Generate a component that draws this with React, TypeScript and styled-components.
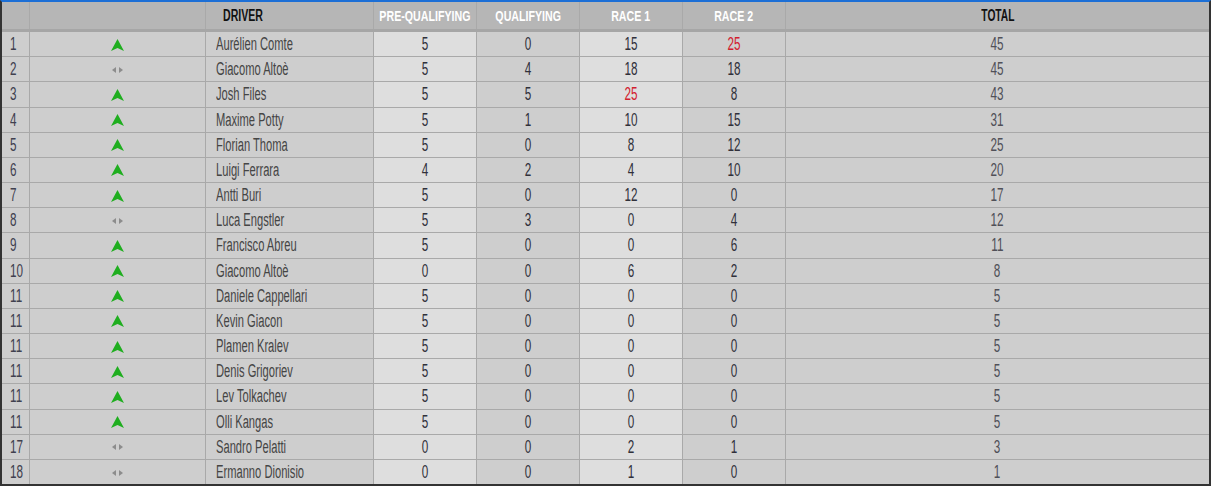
import React from 'react';
import styled, {createGlobalStyle} from 'styled-components';

const GlobalStyle = createGlobalStyle`
  html, body {
    margin: 0;
    padding: 0;
    background: #ffffff;
  }
  body {
    font-family: "Liberation Sans", Arial, sans-serif;
  }
`;

type Trend = 'up' | 'same';

type Entry = {
  pos: number;
  trend: Trend;
  driver: string;
  scores: number[];
  total: number;
  hot?: number[];
};

const rows: Entry[] = [
  {pos: 1, trend: 'up', driver: 'Aurélien Comte', scores: [5, 0, 15, 25], total: 45, hot: [3]},
  {pos: 2, trend: 'same', driver: 'Giacomo Altoè', scores: [5, 4, 18, 18], total: 45},
  {pos: 3, trend: 'up', driver: 'Josh Files', scores: [5, 5, 25, 8], total: 43, hot: [2]},
  {pos: 4, trend: 'up', driver: 'Maxime Potty', scores: [5, 1, 10, 15], total: 31},
  {pos: 5, trend: 'up', driver: 'Florian Thoma', scores: [5, 0, 8, 12], total: 25},
  {pos: 6, trend: 'up', driver: 'Luigi Ferrara', scores: [4, 2, 4, 10], total: 20},
  {pos: 7, trend: 'up', driver: 'Antti Buri', scores: [5, 0, 12, 0], total: 17},
  {pos: 8, trend: 'same', driver: 'Luca Engstler', scores: [5, 3, 0, 4], total: 12},
  {pos: 9, trend: 'up', driver: 'Francisco Abreu', scores: [5, 0, 0, 6], total: 11},
  {pos: 10, trend: 'up', driver: 'Giacomo Altoè', scores: [0, 0, 6, 2], total: 8},
  {pos: 11, trend: 'up', driver: 'Daniele Cappellari', scores: [5, 0, 0, 0], total: 5},
  {pos: 11, trend: 'up', driver: 'Kevin Giacon', scores: [5, 0, 0, 0], total: 5},
  {pos: 11, trend: 'up', driver: 'Plamen Kralev', scores: [5, 0, 0, 0], total: 5},
  {pos: 11, trend: 'up', driver: 'Denis Grigoriev', scores: [5, 0, 0, 0], total: 5},
  {pos: 11, trend: 'up', driver: 'Lev Tolkachev', scores: [5, 0, 0, 0], total: 5},
  {pos: 11, trend: 'up', driver: 'Olli Kangas', scores: [5, 0, 0, 0], total: 5},
  {pos: 17, trend: 'same', driver: 'Sandro Pelatti', scores: [0, 0, 2, 1], total: 3},
  {pos: 18, trend: 'same', driver: 'Ermanno Dionisio', scores: [0, 0, 1, 0], total: 1},
];

const sessions = ['PRE-QUALIFYING', 'QUALIFYING', 'RACE 1', 'RACE 2'];

const columns = '28px 176px 168px 103px 103px 103px 103px 1fr';

const Frame = styled.div`
  box-sizing: border-box;
  width: 1211px;
  height: 486px;
  display: flex;
  flex-direction: column;
  border: 2px solid #333333;
  border-top: 2px solid #1c6fd6;
  background: #cecece;
`;

const Head = styled.div`
  display: grid;
  grid-template-columns: ${columns};
  height: 27px;
  background: #b6b6b6;
  border-bottom: 3px solid #a6a6a6;
`;

const HeadCell = styled.div<{ $dark?: boolean, $left?: boolean }>`
  display: flex;
  align-items: center;
  justify-content: ${p => p.$left ? 'flex-start' : 'center'};
  padding-left: ${p => p.$left ? '17px' : '0'};
  padding-top: 1px;
  border-right: 1px solid #a9a9a9;
  color: ${p => p.$dark ? '#111111' : '#ffffff'};
  font-size: ${p => p.$dark ? '16px' : '14px'};
  font-weight: bold;
  overflow: hidden;
  &:last-child { border-right: none; }
`;

// the source uses a narrow display face; squeeze a regular sans to its width
const Squeeze = styled.span<{ $x: number, $left?: boolean }>`
  display: inline-block;
  white-space: nowrap;
  transform: scaleX(${p => p.$x});
  transform-origin: ${p => p.$left ? 'left center' : 'center center'};
`;

const Body = styled.div`
  flex: 1;
  display: flex;
  flex-direction: column;
`;

const Row = styled.div`
  flex: 1;
  display: grid;
  grid-template-columns: ${columns};
  border-bottom: 1px solid #a9a9a9;
  &:last-child { border-bottom: none; }
`;

const Cell = styled.div<{ $light?: boolean, $align?: 'left' | 'center', $pad?: number, $tone?: string }>`
  display: flex;
  align-items: center;
  justify-content: ${p => p.$align === 'left' ? 'flex-start' : 'center'};
  padding-left: ${p => p.$pad ?? 0}px;
  padding-top: 1px;
  background: ${p => p.$light ? '#dedede' : '#cecece'};
  border-right: 1px solid #a9a9a9;
  color: ${p => p.$tone ?? '#30303a'};
  font-size: 18px;
  &:last-child { border-right: none; }
`;

const TrendIcon = ({trend}: { trend: Trend }) => trend === 'up' ? (
  <svg width="13" height="12" viewBox="0 0 13 12">
    <polygon points="6.5,0 13,12 6.5,9 0,12" fill="#1fae1f"/>
  </svg>
) : (
  <svg width="11" height="6" viewBox="0 0 11 6">
    <polygon points="0,3 4,0 4,6" fill="#8c8c8c"/>
    <polygon points="7,0 11,3 7,6" fill="#8c8c8c"/>
  </svg>
);

export default function App() {
  return (
    <>
      <GlobalStyle/>
      <Frame>
        <Head>
          <HeadCell/>
          <HeadCell/>
          <HeadCell $dark $left><Squeeze $x={0.66} $left>DRIVER</Squeeze></HeadCell>
          {sessions.map(s => <HeadCell key={s}><Squeeze $x={0.76}>{s}</Squeeze></HeadCell>)}
          <HeadCell $dark><Squeeze $x={0.64}>TOTAL</Squeeze></HeadCell>
        </Head>
        <Body>
          {rows.map((r, i) => (
            <Row key={i}>
              <Cell $align="left" $pad={8} $tone="#40404e"><Squeeze $x={0.65} $left>{r.pos}</Squeeze></Cell>
              <Cell><TrendIcon trend={r.trend}/></Cell>
              <Cell $align="left" $pad={10} $tone="#454545"><Squeeze $x={0.62} $left>{r.driver}</Squeeze></Cell>
              {r.scores.map((s, j) => (
                <Cell key={j} $light={j % 2 === 0} $tone={r.hot?.includes(j) ? '#d3202e' : undefined}>
                  <Squeeze $x={0.65}>{s}</Squeeze>
                </Cell>
              ))}
              <Cell $tone="#505058"><Squeeze $x={0.65}>{r.total}</Squeeze></Cell>
            </Row>
          ))}
        </Body>
      </Frame>
    </>
  );
}
